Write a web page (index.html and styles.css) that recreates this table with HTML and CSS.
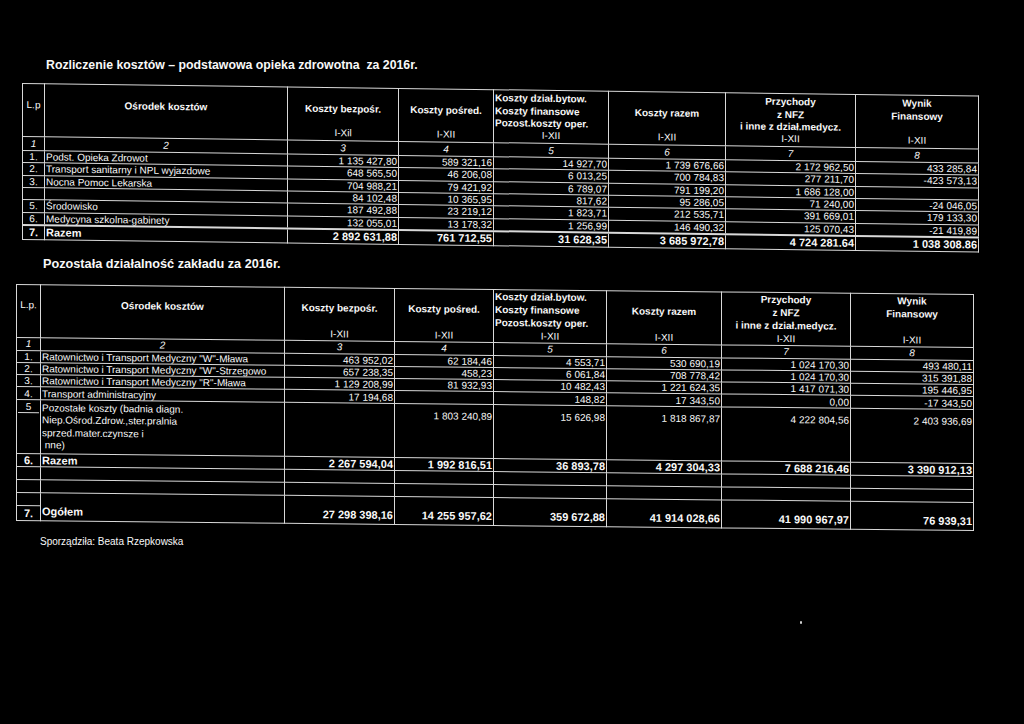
FILE: index.html
```html
<!DOCTYPE html>
<html lang="pl">
<head>
<meta charset="utf-8">
<title>Rozliczenie kosztów 2016</title>
<link rel="stylesheet" href="styles.css">
</head>
<body>
<h1 class="title">Rozliczenie kosztów – podstawowa opieka zdrowotna&nbsp; za 2016r.</h1>

<table class="sheet t1">
  <colgroup><col class="w1"><col class="w2"><col class="w3"><col class="w4"><col class="w5"><col class="w6"><col class="w7"><col class="w8"></colgroup>
  <thead>
    <tr class="hd">
      <th class="left"><div class="hc"><span class="r2">L.p</span></div></th>
      <th><div class="hc"><span class="r2 b">Ośrodek kosztów</span></div></th>
      <th><div class="hc"><span class="r2 b">Koszty bezpośr.</span><span class="r4">I-Xil</span></div></th>
      <th><div class="hc"><span class="r2 b">Koszty pośred.</span><span class="r4">I-XII</span></div></th>
      <th><div class="hc"><span class="b left">Koszty dział.bytow.</span><span class="b left">Koszty finansowe</span><span class="b left">Pozost.koszty oper.</span><span class="r4">I-XII</span></div></th>
      <th><div class="hc"><span class="r2 b">Koszty razem</span><span class="r4">I-XII</span></div></th>
      <th><div class="hc"><span class="b">Przychody</span><span class="b">z NFZ</span><span class="b">i inne z dział.medycz.</span><span class="r4">I-XII</span></div></th>
      <th><div class="hc"><span class="b">Wynik</span><span class="b">Finansowy</span><span class="r4">I-XII</span></div></th>
    </tr>
    <tr class="num"><td>1</td><td>2</td><td>3</td><td>4</td><td>5</td><td>6</td><td>7</td><td>8</td></tr>
  </thead>
  <tbody>
    <tr class="row"><td class="lp">1.</td><td class="name">Podst. Opieka Zdrowot</td><td class="n">1 135 427,80</td><td class="n">589 321,16</td><td class="n">14 927,70</td><td class="n">1 739 676,66</td><td class="n">2 172 962,50</td><td class="n">433 285,84</td></tr>
    <tr class="row"><td class="lp">2.</td><td class="name">Transport sanitarny i NPL wyjazdowe</td><td class="n">648 565,50</td><td class="n">46 206,08</td><td class="n">6 013,25</td><td class="n">700 784,83</td><td class="n">277 211,70</td><td class="n">-423 573,13</td></tr>
    <tr class="row"><td class="lp">3.</td><td class="name">Nocna Pomoc Lekarska</td><td class="n">704 988,21</td><td class="n">79 421,92</td><td class="n">6 789,07</td><td class="n">791 199,20</td><td class="n">1 686 128,00</td><td class="n"></td></tr>
    <tr class="row"><td class="lp"></td><td class="name"></td><td class="n">84 102,48</td><td class="n">10 365,95</td><td class="n">817,62</td><td class="n">95 286,05</td><td class="n">71 240,00</td><td class="n">-24 046,05</td></tr>
    <tr class="row"><td class="lp">5.</td><td class="name">Środowisko</td><td class="n">187 492,88</td><td class="n">23 219,12</td><td class="n">1 823,71</td><td class="n">212 535,71</td><td class="n">391 669,01</td><td class="n">179 133,30</td></tr>
    <tr class="row"><td class="lp">6.</td><td class="name">Medycyna szkolna-gabinety</td><td class="n">132 055,01</td><td class="n">13 178,32</td><td class="n">1 256,99</td><td class="n">146 490,32</td><td class="n">125 070,43</td><td class="n">-21 419,89</td></tr>
    <tr class="tot t1tot"><td class="lp">7.</td><td class="name">Razem</td><td class="n">2 892 631,88</td><td class="n">761 712,55</td><td class="n">31 628,35</td><td class="n">3 685 972,78</td><td class="n">4 724 281.64</td><td class="n">1 038 308.86</td></tr>
  </tbody>
</table>

<h2 class="subtitle">Pozostała działalność zakładu za 2016r.</h2>

<table class="sheet t2">
  <colgroup><col class="w1"><col class="w2"><col class="w3"><col class="w4"><col class="w5"><col class="w6"><col class="w7"><col class="w8"></colgroup>
  <thead>
    <tr class="hd">
      <th class="left"><div class="hc"><span class="r2">L.p.</span></div></th>
      <th><div class="hc"><span class="r2 b">Ośrodek kosztów</span></div></th>
      <th><div class="hc"><span class="r2 b">Koszty bezpośr.</span><span class="r4">I-XII</span></div></th>
      <th><div class="hc"><span class="r2 b">Koszty pośred.</span><span class="r4">I-XII</span></div></th>
      <th><div class="hc"><span class="b left">Koszty dział.bytow.</span><span class="b left">Koszty finansowe</span><span class="b left">Pozost.koszty oper.</span><span class="r4">I-XII</span></div></th>
      <th><div class="hc"><span class="r2 b">Koszty razem</span><span class="r4">I-XII</span></div></th>
      <th><div class="hc"><span class="b">Przychody</span><span class="b">z NFZ</span><span class="b">i inne z dział.medycz.</span><span class="r4">I-XII</span></div></th>
      <th><div class="hc"><span class="b">Wynik</span><span class="b">Finansowy</span><span class="r4">I-XII</span></div></th>
    </tr>
    <tr class="num"><td>1</td><td>2</td><td>3</td><td>4</td><td>5</td><td>6</td><td>7</td><td>8</td></tr>
  </thead>
  <tbody>
    <tr class="row"><td class="lp">1.</td><td class="name">Ratownictwo i Transport Medyczny "W"-Mława</td><td class="n">463 952,02</td><td class="n">62 184,46</td><td class="n">4 553,71</td><td class="n">530 690,19</td><td class="n">1 024 170,30</td><td class="n">493 480,11</td></tr>
    <tr class="row"><td class="lp">2.</td><td class="name">Ratownictwo i Transport Medyczny "W"-Strzegowo</td><td class="n">657 238,35</td><td class="n">458,23</td><td class="n">6 061,84</td><td class="n">708 778,42</td><td class="n">1 024 170,30</td><td class="n">315 391,88</td></tr>
    <tr class="row"><td class="lp">3.</td><td class="name">Ratownictwo i Transport Medyczny "R"-Mława</td><td class="n">1 129 208,99</td><td class="n">81 932,93</td><td class="n">10 482,43</td><td class="n">1 221 624,35</td><td class="n">1 417 071,30</td><td class="n">195 446,95</td></tr>
    <tr class="row"><td class="lp">4.</td><td class="name">Transport administracyjny</td><td class="n">17 194,68</td><td class="n"></td><td class="n">148,82</td><td class="n">17 343,50</td><td class="n">0,00</td><td class="n">-17 343,50</td></tr>
    <tr class="multi"><td class="lp split"><div class="lpbox">5</div></td><td class="name">Pozostałe koszty (badnia diagn.<br>Niep.Ośrod.Zdrow.,ster.pralnia<br>sprzed.mater.czynsze i<br>&nbsp;nne)</td><td class="n"></td><td class="n">1 803 240,89</td><td class="n">15 626,98</td><td class="n">1 818 867,87</td><td class="n">4 222 804,56</td><td class="n">2 403 936,69</td></tr>
    <tr class="tot t2tot"><td class="lp">6.</td><td class="name">Razem</td><td class="n">2 267 594,04</td><td class="n">1 992 816,51</td><td class="n">36 893,78</td><td class="n">4 297 304,33</td><td class="n">7 688 216,46</td><td class="n">3 390 912,13</td></tr>
    <tr class="empty"><td></td><td></td><td></td><td></td><td></td><td></td><td></td><td></td></tr>
    <tr class="empty"><td></td><td></td><td></td><td></td><td></td><td></td><td></td><td></td></tr>
    <tr class="tot grand"><td class="lp low"><div class="lpbox2">7.</div></td><td class="name">Ogółem</td><td class="n">27 298 398,16</td><td class="n">14 255 957,62</td><td class="n">359 672,88</td><td class="n">41 914 028,66</td><td class="n">41 990 967,97</td><td class="n">76 939,31</td></tr>
  </tbody>
</table>

<p class="sign">Sporządziła: Beata Rzepkowska</p>
<span class="speck"></span>
</body>
</html>
```

FILE: styles.css
```css
* { box-sizing: border-box; }
html, body { margin: 0; padding: 0; background: #000; }
body {
  position: relative;
  width: 1024px;
  height: 724px;
  overflow: hidden;
  color: #f8f8f8;
  font-family: "Liberation Sans", Arial, sans-serif;
  font-size: 10px;
}

.title {
  margin: 0;
  padding: 58px 0 0 46px;
  font-size: 12.3px;
  line-height: 15px;
  font-weight: bold;
}

.subtitle {
  margin: 16px 0 0 43px;
  font-size: 12.7px;
  line-height: 16px;
  font-weight: bold;
}

.sign {
  margin: 15px 0 0 40px;
  font-size: 10px;
  line-height: 12px;
}

.sheet {
  border-collapse: collapse;
  table-layout: fixed;
  transform-origin: 0 0;
}
.t1 { margin: 10px 0 0 22px; width: 956px; transform: skewY(0.75deg); }
.t2 { margin: 12px 0 0 16px; width: 957px; transform: skewY(0.6deg); }

.t1 .w1 { width: 22px; } .t1 .w2 { width: 243px; } .t1 .w3 { width: 111px; } .t1 .w4 { width: 95px; }
.t1 .w5 { width: 115px; } .t1 .w6 { width: 117px; } .t1 .w7 { width: 130px; } .t1 .w8 { width: 123px; }
.t2 .w1 { width: 24px; } .t2 .w2 { width: 244px; } .t2 .w3 { width: 110px; } .t2 .w4 { width: 99px; }
.t2 .w5 { width: 113px; } .t2 .w6 { width: 115px; } .t2 .w7 { width: 129px; } .t2 .w8 { width: 123px; }

.sheet th, .sheet td {
  border: 1px solid #d9d9d9;
  padding: 0 1px;
  white-space: nowrap;
  font-weight: normal;
  line-height: 11px;
}

/* header */
.hd th { vertical-align: top; padding: 0 1px; }
.t1 .hd th { height: 53px; }
.t2 .hd th { height: 52px; }
.hc { display: grid; text-align: center; }
.t1 .hc { grid-template-rows: repeat(4, 12.4px); padding-top: 2.3px; line-height: 12.4px; }
.t2 .hc { grid-template-rows: 13px 13px 13px 12.5px; line-height: 13px; }
.hc .r2 { grid-row: 2; }
.hc .r4 { grid-row: 4; }
.b { font-weight: bold; }
.left, .hc .left { text-align: left; }

.num td { text-align: center; font-style: italic; line-height: 12px; }
.t1 .num td { height: 14px; }
.t2 .num td { height: 13px; }

.t1 .row td { height: 12.33px; }
.t2 .row td { height: 12.3px; }
.lp { text-align: center; }
.name { text-align: left; }
.n { text-align: right; }

.tot td { font-weight: bold; font-size: 11px; line-height: 12px; }
.t1tot td { height: 15px; border-top-width: 2px; }
.t2tot td { height: 13px; }

.multi td { height: 54px; vertical-align: top; }
.multi .name { line-height: 12.6px; padding-top: 2px; }
.multi .n { padding-top: 6px; }
.split { padding: 0; }
.lpbox { height: 13.5px; padding-top: 1.5px; line-height: 11px; border-bottom: 1px solid #d9d9d9; }

.empty td { height: 13px; }

.grand td { height: 28px; vertical-align: bottom; padding-bottom: 2px; line-height: 13px; }
.grand .low { padding: 0; }
.lpbox2 { height: 15px; line-height: 14px; border-top: 1px solid #d9d9d9; }

.speck {
  position: absolute;
  left: 800px;
  top: 621px;
  width: 2px;
  height: 3px;
  background: #cfcfcf;
  border-radius: 1px;
}
```
